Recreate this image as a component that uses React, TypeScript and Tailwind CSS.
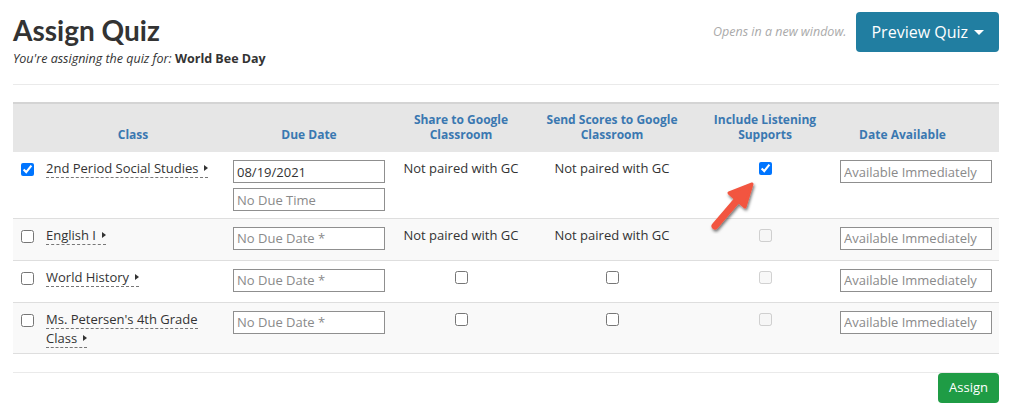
import { useState } from 'react'

interface ClassRow {
  name: string
  dueDate: string
  paired: boolean
  selected: boolean
  striped: boolean
  height: string
}

const rows: ClassRow[] = [
  { name: '2nd Period Social Studies', dueDate: '08/19/2021', paired: false, selected: true, striped: false, height: 'h-[66px]' },
  { name: 'English I', dueDate: '', paired: false, selected: false, striped: true, height: 'h-[42px]' },
  { name: 'World History', dueDate: '', paired: true, selected: false, striped: false, height: 'h-[42px]' },
  { name: "Ms. Petersen's 4th Grade Class", dueDate: '', paired: true, selected: false, striped: true, height: 'h-[51px]' },
]

const font = { fontFamily: '"Open Sans", "Liberation Sans", sans-serif' }

function TextBox({ value, placeholder }: { value?: string; placeholder: string }) {
  return (
    <input
      defaultValue={value}
      placeholder={placeholder}
      className="block h-[23px] w-[152px] border border-[#8f8f8f] bg-white px-[3px] text-[13px] text-[#333] outline-none placeholder:text-[#8a8a8a]"
    />
  )
}

function ClassName({ name }: { name: string }) {
  return (
    <span className="border-b border-dashed border-[#777] leading-[18px] text-[#333]">
      {name}
      <span className="ml-[6px] inline-block h-0 w-0 border-y-[3px] border-l-[4px] border-y-transparent border-l-[#333] align-[2px]" />
    </span>
  )
}

export default function App() {
  const [listening, setListening] = useState(true)

  return (
    <div className="relative h-[420px] w-[1012px] bg-white px-[13px] pt-[12px] text-[13px] text-[#333]" style={font}>
      <div className="flex items-start justify-between">
        <div>
          <h1 className="text-[28px] font-bold leading-[36px] text-[#333]" style={{ fontFamily: 'Lato, "Open Sans", sans-serif' }}>
            Assign Quiz
          </h1>
          <p className="mt-[2px] text-[12.5px] leading-[18px]">
            <span className="italic">You're assigning the quiz for:</span> <span className="font-bold">World Bee Day</span>
          </p>
        </div>
        <div className="flex items-center gap-[10px]">
          <span className="text-[12.5px] italic text-[#aaa]">Opens in a new window.</span>
          <button className="flex h-[40px] items-center gap-[6px] rounded-[4px] bg-[#217ea1] px-[15px] text-[16px] text-white">
            Preview Quiz
            <span className="h-0 w-0 border-x-[5px] border-t-[5px] border-x-transparent border-t-white" />
          </button>
        </div>
      </div>

      <div className="mt-[16px] border-t border-[#eaeaea]" />

      <table className="mt-[17px] w-[986px] table-fixed border-collapse">
        <colgroup>
          <col className="w-[25px]" />
          <col className="w-[190px]" />
          <col className="w-[162px]" />
          <col className="w-[142px]" />
          <col className="w-[160px]" />
          <col className="w-[146px]" />
          <col className="w-[161px]" />
        </colgroup>
        <thead>
          <tr className="h-[49px] border-t-2 border-[#d4d4d4] bg-[#e6e6e6] text-[12px] font-bold leading-[15px] text-[#3a78b1]">
            <th />
            <th className="px-1 pb-[10px] align-bottom">Class</th>
            <th className="px-1 pb-[10px] align-bottom">Due Date</th>
            <th className="px-1 pb-[10px] align-bottom">Share to Google<br />Classroom</th>
            <th className="px-1 pb-[10px] align-bottom">Send Scores to Google<br />Classroom</th>
            <th className="px-1 pb-[10px] align-bottom">Include Listening<br />Supports</th>
            <th className="pb-[10px] pr-[32px] align-bottom">Date Available</th>
          </tr>
        </thead>
        <tbody>
          {rows.map((row, i) => (
            <tr key={row.name} className={`${row.height} border-b border-[#dedede] align-top ${row.striped ? 'bg-[#f9f9f9]' : 'bg-white'}`}>
              <td className="pl-[8px] pt-[11px]">
                <input type="checkbox" defaultChecked={row.selected} className="m-0 block h-[13px] w-[13px]" />
              </td>
              <td className="pl-[8px] pr-[10px] pt-[7px]">
                <ClassName name={row.name} />
              </td>
              <td className="pl-[5px] pt-[8px]">
                <TextBox value={row.dueDate || undefined} placeholder="No Due Date *" />
                {i === 0 && (
                  <div className="mt-[5px]">
                    <TextBox placeholder="No Due Time" />
                  </div>
                )}
              </td>
              <td className="pt-[7px] text-center leading-[18px]">
                {row.paired ? <input type="checkbox" className="mx-auto mt-[3px] block h-[13px] w-[13px]" /> : 'Not paired with GC'}
              </td>
              <td className="pt-[7px] text-center leading-[18px]">
                {row.paired ? <input type="checkbox" className="mx-auto mt-[3px] block h-[13px] w-[13px]" /> : 'Not paired with GC'}
              </td>
              <td className="pt-[10px]">
                {i === 0 ? (
                  <input
                    type="checkbox"
                    checked={listening}
                    onChange={(e) => setListening(e.target.checked)}
                    className="mx-auto block h-[13px] w-[13px]"
                  />
                ) : (
                  <input type="checkbox" disabled className="mx-auto block h-[13px] w-[13px]" />
                )}
              </td>
              <td className="pl-[2px] pt-[8px]">
                <TextBox placeholder="Available Immediately" />
              </td>
            </tr>
          ))}
        </tbody>
      </table>

      <div className="mt-[18px] border-t border-[#eaeaea]" />
      <div className="flex justify-end">
        <button className="h-[30px] rounded-[4px] bg-[#1f9c45] px-[11px] text-[13px] text-white">Assign</button>
      </div>

      {/* annotation arrow */}
      <svg className="absolute left-[706px] top-[178px]" width="54" height="56" viewBox="0 0 54 56">
        <defs>
          <filter id="sh" x="-30%" y="-30%" width="160%" height="160%">
            <feDropShadow dx="1" dy="2" stdDeviation="1.5" floodColor="#000" floodOpacity="0.55" />
          </filter>
        </defs>
        <g filter="url(#sh)">
          <path d="M9 48 L33 20" stroke="#f2553f" strokeWidth="7" strokeLinecap="round" />
          <path d="M46 6 L23 15 L39 29 Z" fill="#f2553f" stroke="#f2553f" strokeWidth="3" strokeLinejoin="round" />
        </g>
      </svg>
    </div>
  )
}
